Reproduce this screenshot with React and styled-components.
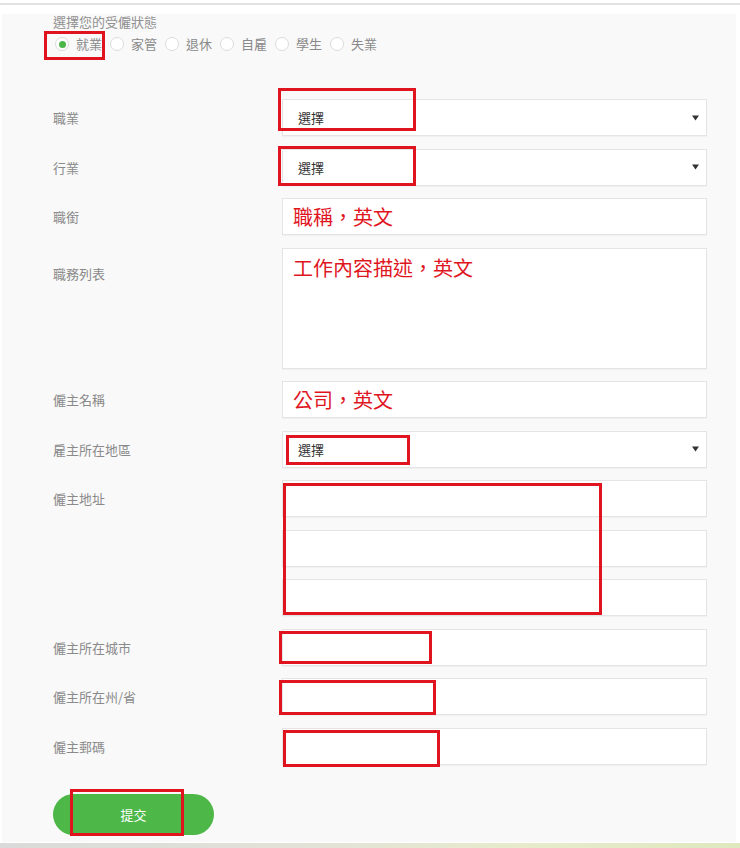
import React from 'react';
import styled, { createGlobalStyle } from 'styled-components';

const GlobalStyle = createGlobalStyle`
  html, body {
    margin: 0;
    padding: 0;
    background: #fff;
  }
  * { box-sizing: border-box; }
`;

const statuses = ['就業', '家管', '退休', '自雇', '學生', '失業'];

// red annotation boxes drawn over the screenshot
const marks = [
  { left: 44, top: 31, width: 61, height: 29 },
  { left: 278, top: 88, width: 138, height: 43 },
  { left: 278, top: 146, width: 138, height: 40 },
  { left: 286, top: 435, width: 124, height: 30 },
  { left: 283, top: 483, width: 319, height: 132 },
  { left: 279, top: 631, width: 153, height: 33 },
  { left: 279, top: 680, width: 157, height: 35 },
  { left: 283, top: 730, width: 157, height: 37 },
  { left: 70, top: 789, width: 114, height: 47 },
];

function Arrow() {
  return (
    <svg width="7" height="6" viewBox="0 0 7 6">
      <path d="M0 0.5 L7 0.5 L3.5 5.5 Z" fill="#333" />
    </svg>
  );
}

function Select() {
  return (
    <Field as="div">
      <SelectText>選擇</SelectText>
      <Arrow />
    </Field>
  );
}

export default function App() {
  return (
    <>
      <GlobalStyle />
      <Page>
        <TopRule />
        <Panel>
          <Title>選擇您的受僱狀態</Title>
          <RadioRow>
            {statuses.map((s, i) => (
              <RadioItem key={s}>
                <Radio checked={i === 0} />
                <RadioLabel>{s}</RadioLabel>
              </RadioItem>
            ))}
          </RadioRow>

          <Form>
            <Row>
              <Label>職業</Label>
              <Select />
            </Row>
            <Row>
              <Label>行業</Label>
              <Select />
            </Row>
            <Row>
              <Label>職銜</Label>
              <Field><Hint>職稱，英文</Hint></Field>
            </Row>
            <Row>
              <Label offset={7}>職務列表</Label>
              <Field tall><Hint top>工作內容描述，英文</Hint></Field>
            </Row>
            <Row>
              <Label>僱主名稱</Label>
              <Field><Hint>公司，英文</Hint></Field>
            </Row>
            <Row>
              <Label>雇主所在地區</Label>
              <Select />
            </Row>
            <Row>
              <Label>僱主地址</Label>
              <Stack>
                <Field />
                <Field />
                <Field />
              </Stack>
            </Row>
            <Row>
              <Label>僱主所在城市</Label>
              <Field />
            </Row>
            <Row>
              <Label>僱主所在州/省</Label>
              <Field />
            </Row>
            <Row>
              <Label>僱主郵碼</Label>
              <Field />
            </Row>
          </Form>

          <SubmitButton>提交</SubmitButton>
        </Panel>
        <BottomStrip />

        {marks.map((m, i) => (
          <Mark key={i} style={m} />
        ))}
      </Page>
    </>
  );
}

const Page = styled.div`
  position: relative;
  width: 740px;
  height: 848px;
  overflow: hidden;
  background: #fff;
  font-family: "Noto Sans CJK TC", "Noto Sans", sans-serif;
`;

const TopRule = styled.div`
  margin-top: 3px;
  height: 2px;
  background: #e2e2e2;
  margin-bottom: 9px;
`;

const Panel = styled.div`
  width: 734px;
  height: 828px;
  margin-left: 2px;
  background: #f9f9f9;
  padding: 0 0 0 51px;
`;

const Title = styled.div`
  font-size: 13px;
  line-height: 16px;
  color: #909090;
`;

const RadioRow = styled.div`
  display: flex;
  gap: 8px;
  margin-top: 4px;
  height: 20px;
  align-items: center;
  padding-left: 2px;
`;

const RadioItem = styled.label`
  display: flex;
  align-items: center;
  gap: 7px;
`;

const Radio = styled.span`
  width: 14px;
  height: 14px;
  border-radius: 50%;
  background: #fff;
  border: 1px solid #dcdcdc;
  display: flex;
  align-items: center;
  justify-content: center;
  &::after {
    content: '';
    width: 7px;
    height: 7px;
    border-radius: 50%;
    background: ${p => (p.checked ? '#4cb748' : 'transparent')};
  }
`;

const RadioLabel = styled.span`
  font-size: 13px;
  color: #8a8a8a;
  line-height: 16px;
`;

const Form = styled.div`
  margin-top: 45px;
  display: flex;
  flex-direction: column;
  gap: 12.5px;
`;

const Row = styled.div`
  display: grid;
  grid-template-columns: 229px 425px;
  align-items: start;
`;

const Label = styled.div`
  padding-top: ${p => p.offset || 0}px;
  font-size: 13px;
  line-height: 37px;
  color: #8a8a8a;
`;

const Stack = styled.div`
  display: flex;
  flex-direction: column;
  gap: 12.5px;
`;

const Field = styled.div`
  height: ${p => (p.tall ? '121px' : '37px')};
  background: #fff;
  border: 1px solid #e4e4e4;
  box-shadow: 0 1px 1px rgba(0, 0, 0, 0.03);
  display: flex;
  align-items: ${p => (p.tall ? 'flex-start' : 'center')};
  justify-content: space-between;
  padding: 0 7px 0 15px;
`;

const SelectText = styled.span`
  font-size: 13px;
  color: #333;
`;

const Hint = styled.span`
  margin-left: -5px;
  margin-top: ${p => (p.top ? '5px' : '0')};
  font-size: 20px;
  font-weight: 400;
  line-height: 28px;
  color: #e0161f;
`;

const SubmitButton = styled.button`
  margin-top: 29px;
  width: 161px;
  height: 41px;
  border: none;
  border-radius: 21px;
  background: #4db748;
  color: #fff;
  font-family: inherit;
  font-size: 13px;
  cursor: pointer;
`;

const BottomStrip = styled.div`
  margin-top: 1px;
  height: 6px;
  background: linear-gradient(90deg, #dadada 0%, #e2e2d8 40%, #e7ebcc 70%, #dfe8bf 100%);
`;

const Mark = styled.div`
  position: absolute;
  border: 3px solid #e0141e;
  pointer-events: none;
`;
